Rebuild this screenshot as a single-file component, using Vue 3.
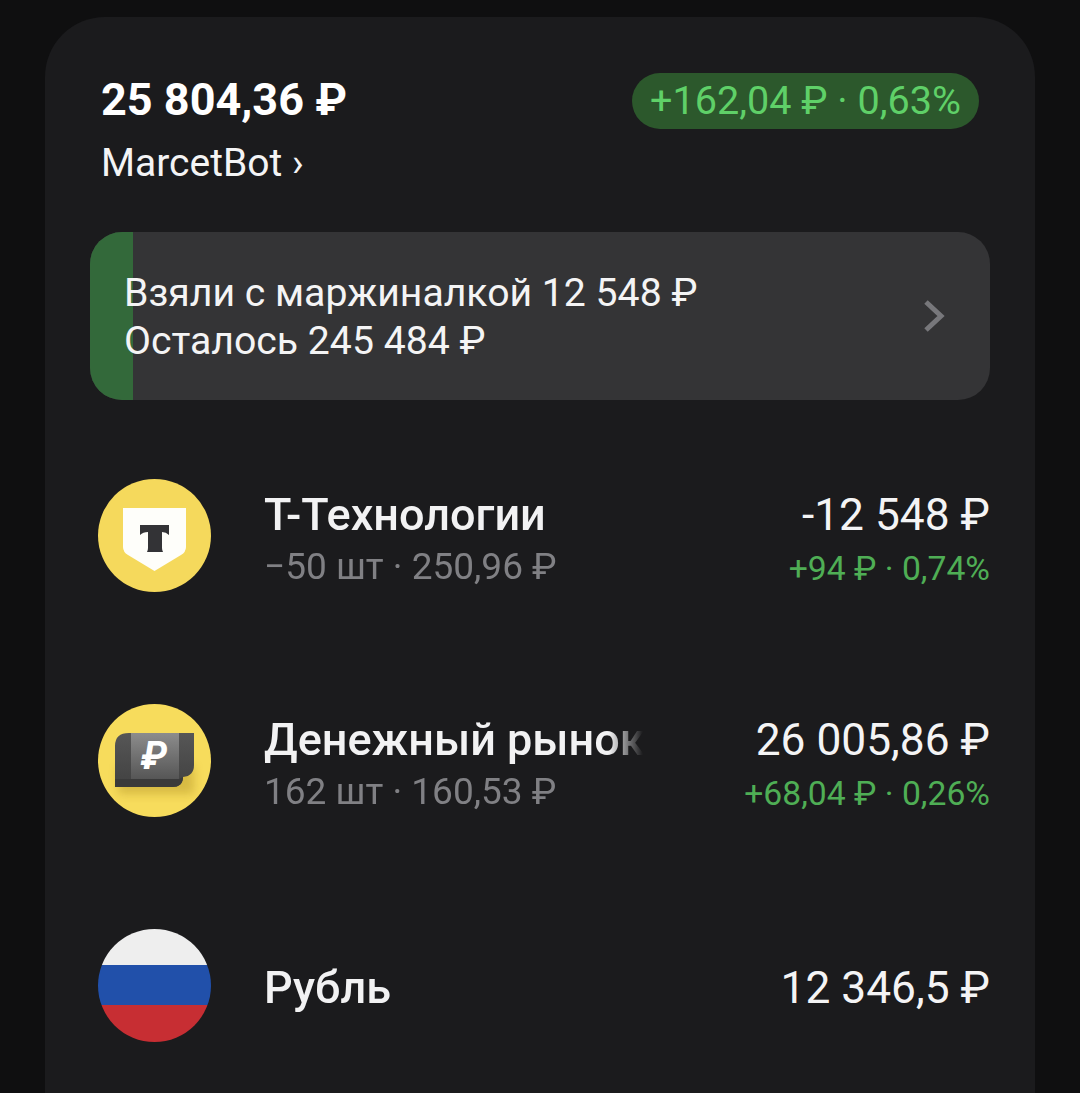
<script setup>
const rows = [
  {
    id: 'tech',
    name: 'Т-Технологии',
    sub: '−50 шт · 250,96 ₽',
    value: '-12 548 ₽',
    change: '+94 ₽ · 0,74%'
  },
  {
    id: 'money',
    name: 'Денежный рынок',
    sub: '162 шт · 160,53 ₽',
    value: '26 005,86 ₽',
    change: '+68,04 ₽ · 0,26%'
  },
  {
    id: 'rub',
    name: 'Рубль',
    sub: '',
    value: '12 346,5 ₽',
    change: ''
  }
]
</script>

<template>
  <div class="screen">
    <div class="card">
      <div class="head">
        <div class="head-left">
          <div class="total">25 804,36 ₽</div>
          <div class="account">MarcetBot ›</div>
        </div>
        <div class="pill">+162,04 ₽ · 0,63%</div>
      </div>

      <div class="banner">
        <div class="banner-fill"></div>
        <div class="banner-text">
          <div>Взяли с маржиналкой 12 548 ₽</div>
          <div>Осталось 245 484 ₽</div>
        </div>
        <svg class="banner-arrow" width="24" height="36" viewBox="0 0 24 36">
          <path d="M4 4 L19 18 L4 32" fill="none" stroke="#77777b" stroke-width="5" />
        </svg>
      </div>

      <div class="list">
        <div v-for="row in rows" :key="row.id" class="row">
          <svg v-if="row.id === 'tech'" class="logo" viewBox="0 0 113 113">
            <circle cx="56.5" cy="56.5" r="56.5" fill="#f5d95c" />
            <path d="M25 29 H88 V68 Q88 73 83 76 L56.5 92 L30 76 Q25 73 25 68 Z" fill="#fefefa" />
            <path d="M42 46 H71 V56 Q68 53 64 53 V69 Q64 71 65 73 H49 Q50 71 50 69 V53 Q45 53 42 56 Z" fill="#333336" />
          </svg>

          <svg v-else-if="row.id === 'money'" class="logo" viewBox="0 0 113 113">
            <defs>
              <linearGradient id="panelFill" x1="0" y1="0" x2="0" y2="1">
                <stop offset="0" stop-color="#8c8c8c" />
                <stop offset="1" stop-color="#565656" />
              </linearGradient>
              <linearGradient id="sideFill" x1="0" y1="0" x2="0" y2="1">
                <stop offset="0" stop-color="#565656" />
                <stop offset="1" stop-color="#414141" />
              </linearGradient>
              <filter id="softShadow" x="-30%" y="-30%" width="160%" height="160%">
                <feGaussianBlur stdDeviation="5" />
              </filter>
              <clipPath id="moneyClip"><circle cx="56.5" cy="56.5" r="56.5" /></clipPath>
            </defs>
            <circle cx="56.5" cy="56.5" r="56.5" fill="#f7dc5c" />
            <g clip-path="url(#moneyClip)">
              <rect x="20" y="62" width="76" height="28" fill="#9c7d12" opacity="0.35" filter="url(#softShadow)" />
            </g>
            <path d="M17 42 Q17 29 31 29 H96 V61 Q96 72 85 73 Q85 83 74 83 H17 Z" fill="url(#sideFill)" />
            <rect x="33" y="29" width="48" height="46" fill="url(#panelFill)" />
            <path d="M17 75 H81 L85 73 Q85 83 74 83 H17 Z" fill="#3a3a3a" />
            <text class="money-glyph" x="56" y="65" text-anchor="middle">₽</text>
          </svg>

          <svg v-else class="logo" viewBox="0 0 113 113">
            <clipPath id="flagClip"><circle cx="56.5" cy="56.5" r="56.5" /></clipPath>
            <g clip-path="url(#flagClip)">
              <rect width="113" height="36" fill="#eeeeee" />
              <rect y="36" width="113" height="40" fill="#2150aa" />
              <rect y="76" width="113" height="37" fill="#c72e33" />
            </g>
          </svg>

          <div class="info">
            <div class="name">{{ row.name }}</div>
            <div v-if="row.sub" class="sub">{{ row.sub }}</div>
          </div>

          <div class="amounts">
            <div class="value">{{ row.value }}</div>
            <div v-if="row.change" class="change">{{ row.change }}</div>
          </div>
        </div>
      </div>
    </div>
  </div>
</template>

<style>
html,
body {
  margin: 0;
  background: #0f0f10;
}
</style>

<style scoped>
.screen {
  height: 1093px;
  padding: 17px 45px 0;
  box-sizing: border-box;
  overflow: hidden;
  font-family: Roboto, "Liberation Sans", sans-serif;
  color: #fff;
}

.card {
  height: 1076px;
  background: #1b1b1d;
  border-radius: 60px 60px 0 0;
  padding: 56px 45px 0;
  box-sizing: border-box;
}

.head {
  display: flex;
  justify-content: space-between;
  align-items: flex-start;
  padding: 0 11px 0 11px;
}

.total {
  font-size: 45px;
  font-weight: 700;
  line-height: 54px;
}

.account {
  font-size: 39px;
  line-height: 44px;
  margin-top: 14px;
  color: #f4f4f5;
}

.pill {
  height: 56px;
  line-height: 56px;
  padding: 0 18px;
  border-radius: 28px;
  background: #2c582c;
  color: #5fd068;
  font-size: 39.6px;
}

.banner {
  position: relative;
  display: flex;
  align-items: center;
  justify-content: space-between;
  height: 168px;
  margin-top: 47px;
  background: #343436;
  border-radius: 32px;
  overflow: hidden;
}

.banner-fill {
  position: absolute;
  left: 0;
  top: 0;
  bottom: 0;
  width: 43px;
  background: #33693a;
}

.banner-text {
  position: relative;
  padding: 1px 0 0 34px;
  font-size: 39.2px;
  line-height: 48px;
  color: #f4f4f5;
}

.banner-arrow {
  margin-right: 44px;
}

.list {
  margin-top: 79px;
}

.row {
  display: flex;
  align-items: center;
  height: 113px;
  margin-bottom: 112px;
  padding-left: 8px;
}

.logo {
  width: 113px;
  height: 113px;
  flex: none;
}

.money-glyph {
  font-family: Roboto, sans-serif;
  font-size: 38px;
  font-weight: 700;
  font-style: italic;
  fill: #fff;
}

.info {
  width: 379px;
  margin-left: 53px;
  padding-top: 4px;
  overflow: hidden;
  white-space: nowrap;
  -webkit-mask-image: linear-gradient(to right, #000 345px, transparent 379px);
  mask-image: linear-gradient(to right, #000 345px, transparent 379px);
}

.name {
  font-size: 45px;
  font-weight: 500;
  line-height: 58px;
  color: #f2f2f3;
}

.sub {
  font-size: 37px;
  line-height: 46px;
  color: #808084;
}

.amounts {
  flex: 1;
  padding-top: 4px;
  text-align: right;
  white-space: nowrap;
}

.value {
  font-size: 44.3px;
  line-height: 58px;
  color: #f4f4f5;
}

.change {
  font-size: 33.7px;
  line-height: 46px;
  padding-top: 2px;
  margin-bottom: -2px;
  color: #4fae55;
}
</style>
